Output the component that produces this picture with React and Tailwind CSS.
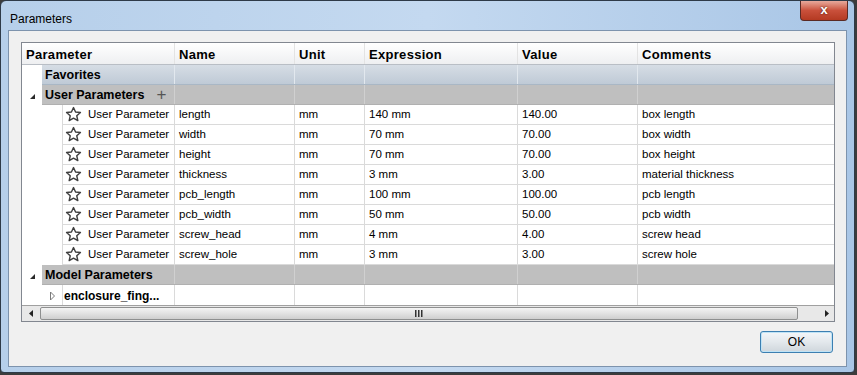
import React from "react";

const rows = [
  ["length", "mm", "140 mm", "140.00", "box length"],
  ["width", "mm", "70 mm", "70.00", "box width"],
  ["height", "mm", "70 mm", "70.00", "box height"],
  ["thickness", "mm", "3 mm", "3.00", "material thickness"],
  ["pcb_length", "mm", "100 mm", "100.00", "pcb length"],
  ["pcb_width", "mm", "50 mm", "50.00", "pcb width"],
  ["screw_head", "mm", "4 mm", "4.00", "screw head"],
  ["screw_hole", "mm", "3 mm", "3.00", "screw hole"],
];

function Star() {
  return (
    <svg width="17" height="17" viewBox="0 0 24 24" className="shrink-0">
      <path
        d="M12 2.2l2.9 6.3 6.9.7-5.2 4.6 1.5 6.8L12 17.1l-6.1 3.5 1.5-6.8-5.2-4.6 6.9-.7z"
        fill="#ffffff"
        stroke="#3f3f3f"
        strokeWidth="2"
        strokeLinejoin="round"
      />
    </svg>
  );
}

function DownTri() {
  return (
    <svg width="7" height="7" viewBox="0 0 7 7">
      <path d="M6 1 L6 6 L1 6 Z" fill="#2a2a2a" />
    </svg>
  );
}

function RightTri() {
  return (
    <svg width="7" height="10" viewBox="0 0 7 10">
      <path d="M1.5 1 L5.5 5 L1.5 9 Z" fill="#ffffff" stroke="#7a7a7a" strokeWidth="1" />
    </svg>
  );
}

const W = { name: "w-[120px]", unit: "w-[70px]", expr: "w-[153px]", value: "w-[120px]" };

function Band({ label, color, plus, tri }) {
  const bg =
    color === "blue"
      ? "bg-gradient-to-b from-[#d6dde5] to-[#bfcad6] border-b border-[#a9b7c5]"
      : "bg-[#bfbfbf] border-b border-[#b0b0b0]";
  const sep = color === "blue" ? "border-r border-[#e2e8ee]" : "border-r border-[#d0d0d0]";
  return (
    <div className="flex h-[20px] shrink-0">
      <div className="w-[20px] shrink-0 bg-white flex items-center justify-center pt-[2px]">
        {tri ? <DownTri /> : null}
      </div>
      <div className={`flex flex-1 ${bg}`}>
        <div className={`w-[133px] shrink-0 ${sep} flex items-center pl-[3px] pt-[2px] font-bold text-[12.5px] gap-[12px]`}>
          <span>{label}</span>
          {plus ? <span className="text-[#555] text-[17px] font-normal leading-none -mt-[3px]">+</span> : null}
        </div>
        <div className={`${W.name} shrink-0 ${sep}`} />
        <div className={`${W.unit} shrink-0 ${sep}`} />
        <div className={`${W.expr} shrink-0 ${sep}`} />
        <div className={`${W.value} shrink-0 ${sep}`} />
        <div className="flex-1" />
      </div>
    </div>
  );
}

function DataRow({ r }) {
  const cell = "shrink-0 border-r border-[#dadada] flex items-center pl-[4px] pt-[1px]";
  return (
    <div className="flex h-[20px] shrink-0">
      <div className="w-[40px] shrink-0 bg-white" />
      <div className="flex flex-1 border-b border-[#dadada] bg-white">
        <div className="w-[113px] shrink-0 border-l border-r border-[#dadada] flex items-center pl-[2px] gap-[6px]">
          <Star />
          <span className="pt-[1px]">User Parameter</span>
        </div>
        <div className={`${W.name} ${cell}`}>{r[0]}</div>
        <div className={`${W.unit} ${cell}`}>{r[1]}</div>
        <div className={`${W.expr} ${cell}`}>{r[2]}</div>
        <div className={`${W.value} ${cell}`}>{r[3]}</div>
        <div className="flex-1 flex items-center pl-[4px] pt-[1px]">{r[4]}</div>
      </div>
    </div>
  );
}

export default function App() {
  const hcell = "shrink-0 border-r border-[#e3e3e3] flex items-center pl-[4px] pt-[2px] font-bold text-[13px] tracking-[0.3px]";
  const ecell = "shrink-0 border-r border-[#dadada]";
  return (
    <div
      className="w-[857px] h-[375px] bg-[#3c3c3c] text-black text-[11.5px]"
      style={{ fontFamily: '"Liberation Sans", Arial, sans-serif' }}
    >
      <div className="w-[855px] h-[373px] rounded-t-[6px] rounded-b-[4px] border border-[#2e3a48] bg-gradient-to-r from-[#b6cfea] via-[#c4d9f0] to-[#a9c6e6] flex flex-col px-[7px] pb-[5px]">
        {/* title bar */}
        <div className="h-[29px] flex items-start justify-between shrink-0">
          <div className="pt-[9px] pl-[2px] text-[12px] text-black">Parameters</div>
          <div className="-mr-[1px] w-[48px] h-[20px] rounded-b-[4px] border border-[#5a2a24] border-t-0 bg-gradient-to-b from-[#e6a99c] via-[#c9503b] to-[#b43a22] flex items-center justify-center">
            <span className="text-white font-bold text-[13px] leading-none -mt-[2px]" style={{ textShadow: "0 0 2px #3a1008" }}>
              x
            </span>
          </div>
        </div>
        {/* client */}
        <div className="flex-1 border border-[#7d93ad] bg-[#f0f0f0] flex flex-col pl-[12px] pr-[13px] pt-[11px]">
          {/* table */}
          <div className="w-[814px] h-[280px] border border-[#828790] bg-white flex flex-col overflow-hidden">
            {/* header */}
            <div className="flex h-[22px] shrink-0 bg-gradient-to-b from-[#ffffff] to-[#eeeff1] border-b border-[#b9bec5]">
              <div className={`w-[153px] ${hcell}`}>Parameter</div>
              <div className={`${W.name} ${hcell}`}>Name</div>
              <div className={`${W.unit} ${hcell}`}>Unit</div>
              <div className={`${W.expr} ${hcell}`}>Expression</div>
              <div className={`${W.value} ${hcell}`}>Value</div>
              <div className="flex-1 flex items-center pl-[4px] pt-[2px] font-bold text-[13px] tracking-[0.3px]">Comments</div>
            </div>
            <Band label="Favorites" color="blue" />
            <Band label="User Parameters" color="gray" plus tri />
            {rows.map((r) => (
              <DataRow key={r[0]} r={r} />
            ))}
            <Band label="Model Parameters" color="gray" tri />
            <div className="flex h-[20px] shrink-0">
              <div className="w-[40px] shrink-0 flex items-center justify-end pr-[6px] pt-[1px]">
                <RightTri />
              </div>
              <div className="w-[113px] shrink-0 border-l border-r border-[#dadada] flex items-center pl-[1px] pt-[1px] font-bold text-[12px] whitespace-nowrap overflow-hidden">
                enclosure_fing...
              </div>
              <div className={`${W.name} ${ecell}`} />
              <div className={`${W.unit} ${ecell}`} />
              <div className={`${W.expr} ${ecell}`} />
              <div className={`${W.value} ${ecell}`} />
              <div className="flex-1" />
            </div>
            {/* horizontal scrollbar */}
            <div className="flex h-[16px] shrink-0 bg-[#e8e8e8] border-t border-[#a0a0a0] items-stretch">
              <div className="w-[18px] shrink-0 flex items-center justify-center">
                <svg width="5" height="7" viewBox="0 0 5 7">
                  <path d="M4 0 L4 7 L0 3.5 Z" fill="#222" />
                </svg>
              </div>
              <div className="w-[758px] shrink-0 my-[1px] rounded-[2px] border border-[#8e8f8f] bg-gradient-to-b from-[#f4f4f4] via-[#e2e2e2] to-[#cfcfcf] flex items-center justify-center">
                <svg width="8" height="7" viewBox="0 0 8 7">
                  <rect x="0" y="0" width="1.5" height="7" fill="#333" />
                  <rect x="3" y="0" width="1.5" height="7" fill="#333" />
                  <rect x="6" y="0" width="1.5" height="7" fill="#333" />
                </svg>
              </div>
              <div className="flex-1 flex items-center justify-end pr-[5px]">
                <svg width="5" height="7" viewBox="0 0 5 7">
                  <path d="M1 0 L1 7 L5 3.5 Z" fill="#222" />
                </svg>
              </div>
            </div>
          </div>
          {/* footer */}
          <div className="flex justify-end pt-[9px]">
            <button className="w-[73px] h-[22px] rounded-[3px] border border-[#3c7fb1] bg-gradient-to-b from-[#f3f6f9] via-[#e3e8ec] to-[#cfd6dc] text-[12px] text-black shadow-[inset_0_0_0_1px_#bfe3f6]">
              OK
            </button>
          </div>
        </div>
      </div>
    </div>
  );
}
